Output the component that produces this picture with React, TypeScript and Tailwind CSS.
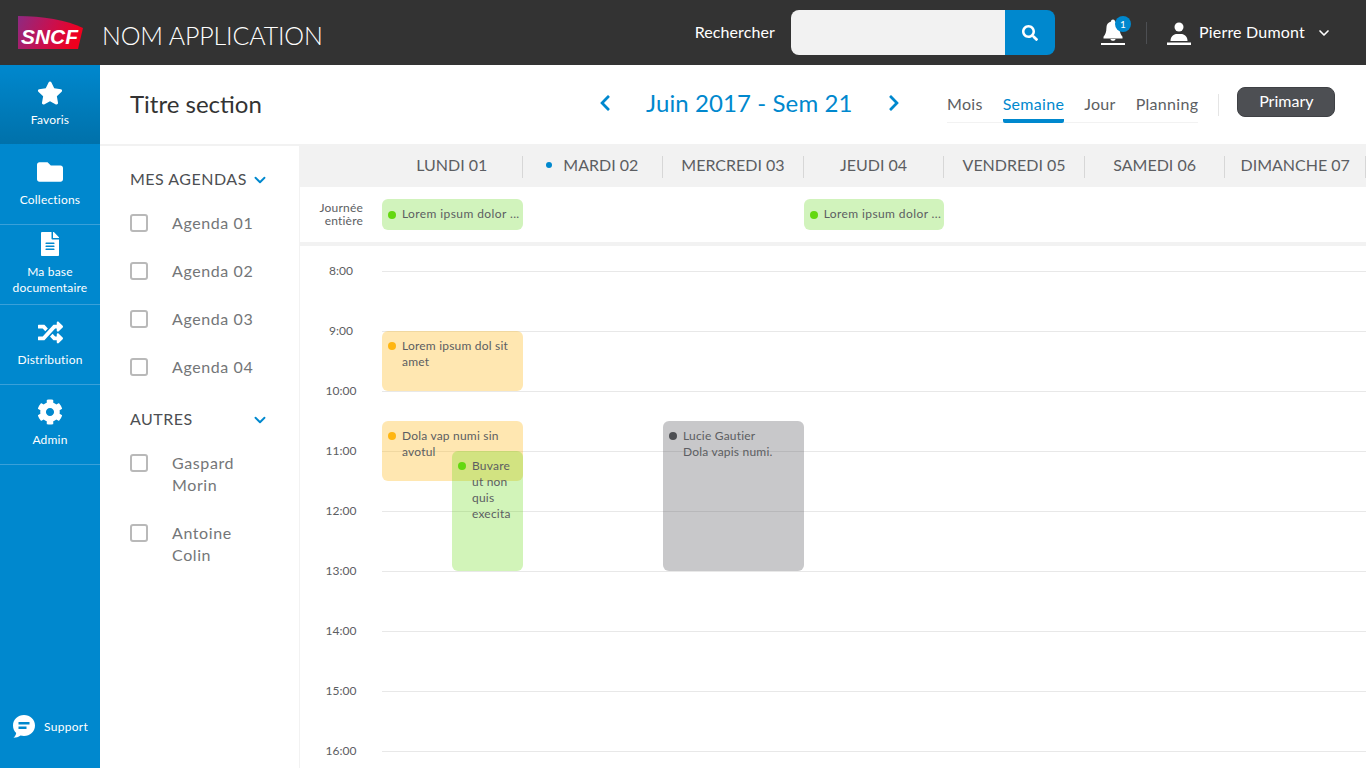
import { FaStar, FaFolder, FaFileAlt, FaRandom, FaCog, FaSearch, FaChevronLeft, FaChevronRight } from "react-icons/fa";
import { ChevronDown } from "lucide-react";

const navItems = [
  { label: ["Favoris"], icon: <FaStar size={26} className="mt-[2px]" />, active: true },
  { label: ["Collections"], icon: <FaFolder size={26} /> },
  { label: ["Ma base", "documentaire"], icon: <FaFileAlt size={24} />, tall: true },
  { label: ["Distribution"], icon: <FaRandom size={25} className="mt-[2px]" /> },
  { label: ["Admin"], icon: <FaCog size={26} /> },
];

const days = ["LUNDI 01", "MARDI 02", "MERCREDI 03", "JEUDI 04", "VENDREDI 05", "SAMEDI 06", "DIMANCHE 07"];
const hours = ["8:00", "9:00", "10:00", "11:00", "12:00", "13:00", "14:00", "15:00", "16:00"];

function Logo() {
  return (
    <svg width="68" height="36" viewBox="0 0 68 36" className="shrink-0">
      <defs>
        <linearGradient id="sncf" x1="0" y1="0" x2="1" y2="0.25">
          <stop offset="0" stopColor="#8d2a82" />
          <stop offset="0.55" stopColor="#c8104f" />
          <stop offset="1" stopColor="#f0001e" />
        </linearGradient>
      </defs>
      <path d="M1 1 C25 1 50 5 66 13 L61 34 L1 34 Z" fill="url(#sncf)" />
      <text x="4" y="29" fill="#fff" fontSize="20" fontWeight="700" fontStyle="italic" fontFamily="'Liberation Sans', sans-serif" textLength="57" lengthAdjust="spacingAndGlyphs">SNCF</text>
    </svg>
  );
}

function Bell() {
  return (
    <svg width="24" height="26" viewBox="0 0 24 26" fill="#fff">
      <path d="M12 0.5 c1.2 0 2 .8 2 1.9 c3 .8 4.600 3.200 4.600 6.900 c0 3.600 1 6.500 2.900 8.500 v1.700 H2.500 v-1.700 c1.900-2 2.900-4.900 2.900-8.500 c0-3.700 1.600-6.100 4.600-6.900 c0-1.100 .8-1.900 2-1.900z" />
      <path d="M9.500 20 h5 c0 1.100-1.100 1.800-2.500 1.800 s-2.500-.7-2.500-1.800z" />
      <rect x="0" y="24" width="24" height="2" />
    </svg>
  );
}

function UserIcon() {
  return (
    <svg width="24" height="24" viewBox="0 0 24 24" fill="#fff">
      <circle cx="12" cy="6" r="4.500" />
      <path d="M3.500 20 c0-4.500 3-6.500 5.500-7 h6 c2.500 .5 5.500 2.500 5.500 7z" />
      <rect x="0" y="21.500" width="24" height="2.500" />
    </svg>
  );
}

function Support() {
  return (
    <svg width="22" height="23" viewBox="0 0 22 23" fill="#fff">
      <path d="M11 0 C17 0 22 4.600 22 10.500 S17 21 11 21 C9.800 21 8.600 20.800 7.500 20.500 C5.500 22 3 22.700 0.500 22.800 C2 21.500 3 19.800 3.200 18 C1.200 16.100 0 13.500 0 10.500 C0 4.600 5 0 11 0z" />
      <rect x="5.500" y="7" width="11" height="2.500" fill="#0088ce" />
      <rect x="5.500" y="11.500" width="8" height="2.500" fill="#0088ce" />
    </svg>
  );
}

function Check({ label }: { label: string[] }) {
  return (
    <div className="flex items-start">
      <span className="mt-[2px] h-[18px] w-[18px] shrink-0 rounded-[3px] border-2 border-[#b9b9b9] bg-white" />
      <div className="ml-6 text-[16px] leading-[22px] tracking-[0.6px] text-[#747678]">
        {label.map((l) => (
          <div key={l}>{l}</div>
        ))}
      </div>
    </div>
  );
}

function SectionTitle({ title }: { title: string }) {
  return (
    <div className="flex items-center justify-between pr-[30px] text-[16px] leading-[22px] tracking-[0.5px] text-[#4d4f53]">
      <span>{title}</span>
      <ChevronDown size={18} strokeWidth={2.5} className="mt-[2px] text-[#0088ce]" />
    </div>
  );
}

function Event({ className, dot, lines }: { className: string; dot: string; lines: string[] }) {
  return (
    <div className={`absolute flex rounded-[6px] pl-[6px] pt-[7px] text-[12px] leading-[16px] tracking-[0.2px] text-[#5c5e62] ${className}`}>
      <span className={`mt-[4px] h-2 w-2 shrink-0 rounded-full ${dot}`} />
      <div className="ml-[6px]">
        {lines.map((l) => (
          <div key={l}>{l}</div>
        ))}
      </div>
    </div>
  );
}

function AllDay() {
  return (
    <div className="flex h-[31px] items-center overflow-hidden rounded-[6px] bg-[#d1f3bc] pb-[1px] pl-[6px] text-[12px] tracking-[0.4px] text-[#5c5e62]">
      <span className="mt-[1px] h-2 w-2 shrink-0 rounded-full bg-[#63d80f]" />
      <span className="ml-[6px] whitespace-nowrap">Lorem ipsum dolor ...</span>
    </div>
  );
}

export default function App() {
  return (
    <div className="flex h-[768px] w-[1366px] flex-col overflow-hidden bg-white font-['Lato',sans-serif]">
      {/* header */}
      <header className="flex h-[65px] shrink-0 items-center bg-[#333333] text-white">
        <div className="ml-[17px]">
          <Logo />
        </div>
        <div className="ml-[17px] mt-[5px] text-[25px] font-light leading-8 tracking-[-0.15px]">NOM APPLICATION</div>
        <div className="ml-auto flex items-center">
          <span className="-mt-[2px] mr-4 text-[16px] tracking-[0.1px]">Rechercher</span>
          <div className="h-[45px] w-[214px] rounded-l-[8px] bg-[#f2f2f2]" />
          <div className="flex h-[45px] w-[50px] items-center justify-center rounded-r-[8px] bg-[#0088ce]">
            <FaSearch size={16} />
          </div>
          <div className="relative ml-[46px] -mt-[2px]">
            <Bell />
            <span className="absolute -top-[3px] left-[14px] flex h-4 w-4 items-center justify-center rounded-full bg-[#0088ce] text-[10px] leading-none">1</span>
          </div>
          <div className="ml-[21px] h-[22px] w-px bg-[#4d4f53]" />
          <div className="ml-5">
            <UserIcon />
          </div>
          <span className="-mt-[2px] ml-2 text-[16px] tracking-[0.2px]">Pierre Dumont</span>
          <ChevronDown size={16} strokeWidth={2.5} className="ml-[11px] mr-[34px]" />
        </div>
      </header>

      <div className="flex min-h-0 flex-1">
        {/* sidebar */}
        <aside className="flex w-[100px] shrink-0 flex-col bg-[#0088ce] text-white">
          {navItems.map((item) => (
            <div
              key={item.label[0]}
              className={`flex h-[80px] flex-col items-center border-b border-[#3aa0d9] ${item.tall ? "pt-[6px]" : "pt-[14px]"} ${item.active ? "border-transparent bg-gradient-to-b from-[#0088ce] to-[#0071aa]" : ""}`}
            >
              <div className="-mt-px flex h-[27px] items-center">{item.icon}</div>
              <div className="mt-[7px] text-center text-[12px] leading-[16px] tracking-[0.2px]">
                {item.label.map((l) => (
                  <div key={l}>{l}</div>
                ))}
              </div>
            </div>
          ))}
          <div className="mt-auto mb-[30px] flex items-center pl-[13px]">
            <Support />
            <span className="ml-[9px] text-[12px] tracking-[0.3px]">Support</span>
          </div>
        </aside>

        <main className="flex min-w-0 flex-1 flex-col">
          {/* toolbar */}
          <div className="flex h-[81px] shrink-0 items-center border-b-2 border-[#f2f2f2] pl-[30px]">
            <h1 className="-mt-[2px] w-[466px] text-[24px] font-normal text-[#333333]">Titre section</h1>
            <div className="flex items-center text-[#0088ce]">
              <FaChevronLeft size={18} className="-mt-[4px]" />
              <span className="ml-[32px] w-[239px] -mt-[4px] text-[24px] leading-8 tracking-[0.1px]">Juin 2017 - Sem 21</span>
              <FaChevronRight size={18} className="-mt-[4px]" />
            </div>
            <div className="ml-[44px] flex h-[36px] items-end">
              <div className="flex gap-5 border-b border-[#f2f2f2] text-[16px] leading-[22px] tracking-[0.3px] text-[#5c5e62]">
                <span className="pb-[7px]">Mois</span>
                <span className="-mb-px rounded-b-[2px] border-b-[4px] border-[#0088ce] pb-[4px] text-[#0088ce]">Semaine</span>
                <span className="pb-[7px]">Jour</span>
                <span className="pb-[7px]">Planning</span>
              </div>
            </div>
            <div className="ml-5 h-[22px] w-px bg-[#e5e5e5]" />
            <button className="ml-[18px] -mt-[5px] h-[30px] w-[98px] rounded-[8px] border border-[#3f4145] bg-[#4d4f53] pb-[2px] text-[16px] text-white">Primary</button>
          </div>

          <div className="flex min-h-0 flex-1">
            {/* agendas */}
            <div className="w-[200px] shrink-0 border-r border-[#f2f2f2] pl-[30px] pt-[22px]">
              <SectionTitle title="MES AGENDAS" />
              <div className="mt-[22px] flex flex-col gap-[26px]">
                {["Agenda 01", "Agenda 02", "Agenda 03", "Agenda 04"].map((a) => (
                  <Check key={a} label={[a]} />
                ))}
              </div>
              <div className="mt-[30px]">
                <SectionTitle title="AUTRES" />
              </div>
              <div className="mt-[22px] flex flex-col gap-[26px]">
                <Check label={["Gaspard", "Morin"]} />
                <Check label={["Antoine", "Colin"]} />
              </div>
            </div>

            {/* calendar */}
            <div className="flex min-w-0 flex-1 flex-col overflow-hidden">
              <div className="flex h-[41px] shrink-0 items-center bg-[#f2f2f2] pl-[82px]">
                <div className="grid w-full grid-cols-7">
                  {days.map((d, i) => (
                    <div key={d} className="flex h-[22px] items-center justify-center border-r border-[#d7d7d7] text-[16px] text-[#5c5e62]">
                      <span className="-mt-[3px] flex items-center">
                        {i === 1 && <span className="mr-[11px] h-[6px] w-[6px] rounded-full bg-[#0088ce]" />}
                        {d}
                      </span>
                    </div>
                  ))}
                </div>
              </div>
              <div className="flex h-[55px] shrink-0 items-start">
                <div className="w-[63px] shrink-0 pt-[14px] text-right text-[12px] leading-[13px] tracking-[0.2px] text-[#5c5e62]">
                  <div>Journée</div>
                  <div>entière</div>
                </div>
                <div className="ml-[19px] grid flex-1 grid-cols-7 pt-[12px]">
                  <AllDay />
                  <div />
                  <div />
                  <AllDay />
                </div>
              </div>
              <div className="h-1 shrink-0 bg-[#f2f2f2]" />
              <div className="relative flex-1">
                <div className="pt-[25px]">
                  {hours.map((h) => (
                    <div key={h} className="flex h-[60px]">
                      <div className="-mt-2 h-4 w-[82px] shrink-0 text-center text-[12px] leading-4 text-[#5c5e62]">{h}</div>
                      <div className="h-px flex-1 bg-[#e8e8e8]" />
                    </div>
                  ))}
                </div>
                <Event className="left-[82px] top-[85px] h-[60px] w-[141px] bg-[#ffb612]/33" dot="bg-[#ffb612]" lines={["Lorem ipsum dol sit", "amet"]} />
                <Event className="left-[82px] top-[175px] h-[60px] w-[141px] bg-[#ffb612]/33" dot="bg-[#ffb612]" lines={["Dola vap numi sin", "avotul"]} />
                <Event className="left-[152px] top-[205px] h-[120px] w-[71px] bg-[#63d80f]/29" dot="bg-[#63d80f]" lines={["Buvare", "ut non", "quis", "execita"]} />
                <Event className="left-[363px] top-[175px] h-[150px] w-[141px] bg-[#4d4f53]/31" dot="bg-[#4d4f53]" lines={["Lucie Gautier", "Dola vapis numi."]} />
              </div>
            </div>
          </div>
        </main>
      </div>
    </div>
  );
}
